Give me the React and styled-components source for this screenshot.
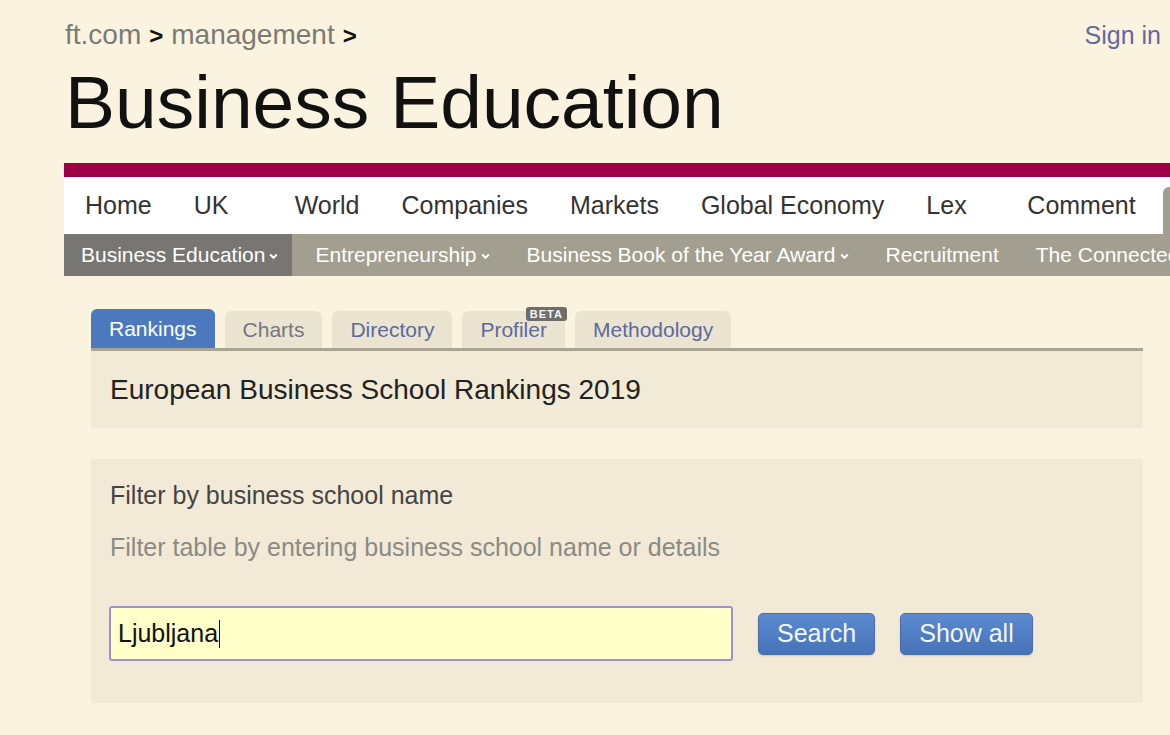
import React from "react";
import styled, { createGlobalStyle } from "styled-components";

const Global = createGlobalStyle`
  html, body { margin: 0; padding: 0; background: #faf3df; overflow: hidden; }
  body { font-family: "Liberation Sans", Arial, sans-serif; }
  #root { min-height: 735px; }
`;

const Page = styled.div`
  padding-left: 64px;
`;

const TopRow = styled.div`
  display: flex;
  justify-content: space-between;
  align-items: baseline;
  padding: 19px 9px 0 1px;
  font-size: 28px;
  line-height: 32px;
`;

const Crumbs = styled.div`
  color: #7b7b76;
  white-space: nowrap;
`;

const Crumb = styled.span`
  color: #7b7b76;
`;

const Sep = styled.span`
  font-size: 24px;
  font-weight: bold;
  color: #111;
  margin: 0 8px 0 8px;
`;

const SignIn = styled.span`
  font-size: 25px;
  color: #66699b;
`;

const Title = styled.h1`
  margin: 10px 0 21px 1px;
  font-size: 75px;
  line-height: 80px;
  font-weight: normal;
  color: #111;
  white-space: nowrap;
`;

const MaroonBar = styled.div`
  height: 14px;
  background: #9d0047;
`;

const MainNav = styled.nav`
  display: flex;
  align-items: flex-end;
  height: 57px;
  background: #fff;
  white-space: nowrap;
  overflow: hidden;
`;

const NavItem = styled.div`
  box-sizing: border-box;
  min-width: 101px;
  height: ${(p) => (p.$active ? "47px" : "57px")};
  padding: 0 21px;
  display: flex;
  align-items: center;
  font-size: 25px;
  color: #333;
  flex: none;
  background: ${(p) => (p.$active ? "#a29f90" : "transparent")};
  border-radius: ${(p) => (p.$active ? "6px 6px 0 0" : "0")};
  margin-left: ${(p) => (p.$active ? "6px" : "0")};
`;

const SubNav = styled.nav`
  display: flex;
  height: 42px;
  background: #a29f90;
  white-space: nowrap;
  overflow: hidden;
`;

const SubItem = styled.div`
  display: flex;
  align-items: center;
  flex: none;
  padding: 0 14px 0 17px;
  margin-right: 6px;
  font-size: 21px;
  color: #fff;
  background: ${(p) => (p.$active ? "#777672" : "transparent")};
`;

const Chevron = styled.svg`
  margin-left: 4px;
  width: 9px;
  height: 7px;
  margin-top: 2px;
`;

const Content = styled.div`
  margin: 33px 0 0 27px;
  width: 1052px;
`;

const Tabs = styled.div`
  display: flex;
  align-items: flex-end;
  gap: 10px;
  border-bottom: 3px solid #a8a491;
`;

const Tab = styled.div`
  position: relative;
  box-sizing: border-box;
  height: ${(p) => (p.$active ? "39px" : "37px")};
  padding: 0 18px;
  display: flex;
  align-items: center;
  font-size: 21px;
  border-radius: 6px 6px 0 0;
  background: ${(p) => (p.$active ? "#4c79bd" : "#ebe4d0")};
  color: ${(p) => (p.$active ? "#fff" : p.$visited ? "#737584" : "#5d6a9e")};
`;

const Beta = styled.span`
  position: absolute;
  top: -4px;
  right: -2px;
  height: 14px;
  padding: 0 4px;
  border-radius: 3px;
  background: #6e6d6a;
  color: #f4f4f4;
  font-size: 11px;
  font-weight: bold;
  line-height: 14px;
  letter-spacing: 1px;
`;

const HeadingBox = styled.div`
  height: 77px;
  padding: 0 19px;
  display: flex;
  align-items: center;
  background: #f1ead7;
  border-bottom: 1px solid #f7f1e2;
  font-size: 28px;
  color: #222;
`;

const FilterBox = styled.div`
  margin-top: 30px;
  background: #f2ead7;
  padding: 22px 18px 42px 18px;
`;

const FilterTitle = styled.div`
  font-size: 25px;
  line-height: 29px;
  color: #444;
  padding-left: 1px;
`;

const FilterHint = styled.div`
  margin-top: 23px;
  font-size: 25px;
  line-height: 29px;
  color: #8b8a84;
  padding-left: 1px;
`;

const Controls = styled.div`
  margin-top: 44px;
  display: flex;
  align-items: center;
  gap: 25px;
`;

const Field = styled.div`
  box-sizing: border-box;
  width: 624px;
  height: 55px;
  padding: 0 7px;
  display: flex;
  align-items: center;
  border: 2px solid #9d90d2;
  border-radius: 3px;
  background: #ffffc9;
  font-size: 25px;
  color: #111;
`;

const Caret = styled.span`
  display: inline-block;
  width: 1px;
  height: 28px;
  background: #111;
  margin-left: 1px;
`;

const Button = styled.button`
  box-sizing: border-box;
  height: 42px;
  padding: 0 18px;
  border: 1px solid #4a6eaa;
  border-radius: 5px;
  background: linear-gradient(#5b8ad0, #4673b8);
  color: #f3f6ff;
  font-family: "Liberation Sans", Arial, sans-serif;
  font-size: 25px;
  box-shadow: 0 1px 2px rgba(0, 0, 0, 0.15);
`;

const Down = () => (
  <Chevron viewBox="0 0 9 7">
    <polyline points="1.2,1.5 4.5,4.8 7.8,1.5" fill="none" stroke="#fff" strokeWidth="2" />
  </Chevron>
);

const mainItems = ["Home", "UK", "World", "Companies", "Markets", "Global Economy", "Lex", "Comment"];

export default function App() {
  return (
    <>
      <Global />
      <Page>
        <TopRow>
          <Crumbs>
            <Crumb>ft.com</Crumb>
            <Sep>&gt;</Sep>
            <Crumb>management</Crumb>
            <Sep>&gt;</Sep>
          </Crumbs>
          <SignIn>Sign in</SignIn>
        </TopRow>
        <Title>Business Education</Title>
        <MaroonBar />
        <MainNav>
          {mainItems.map((t) => (
            <NavItem key={t}>{t}</NavItem>
          ))}
          <NavItem $active>Management</NavItem>
        </MainNav>
        <SubNav>
          <SubItem $active>
            Business Education
            <Down />
          </SubItem>
          <SubItem>
            Entrepreneurship
            <Down />
          </SubItem>
          <SubItem>
            Business Book of the Year Award
            <Down />
          </SubItem>
          <SubItem>Recruitment</SubItem>
          <SubItem>The Connected Business</SubItem>
        </SubNav>
        <Content>
          <Tabs>
            <Tab $active>Rankings</Tab>
            <Tab $visited>Charts</Tab>
            <Tab>Directory</Tab>
            <Tab>
              Profiler
              <Beta>BETA</Beta>
            </Tab>
            <Tab>Methodology</Tab>
          </Tabs>
          <HeadingBox>European Business School Rankings 2019</HeadingBox>
          <FilterBox>
            <FilterTitle>Filter by business school name</FilterTitle>
            <FilterHint>Filter table by entering business school name or details</FilterHint>
            <Controls>
              <Field role="textbox">
                Ljubljana
                <Caret />
              </Field>
              <Button>Search</Button>
              <Button>Show all</Button>
            </Controls>
          </FilterBox>
        </Content>
      </Page>
    </>
  );
}
